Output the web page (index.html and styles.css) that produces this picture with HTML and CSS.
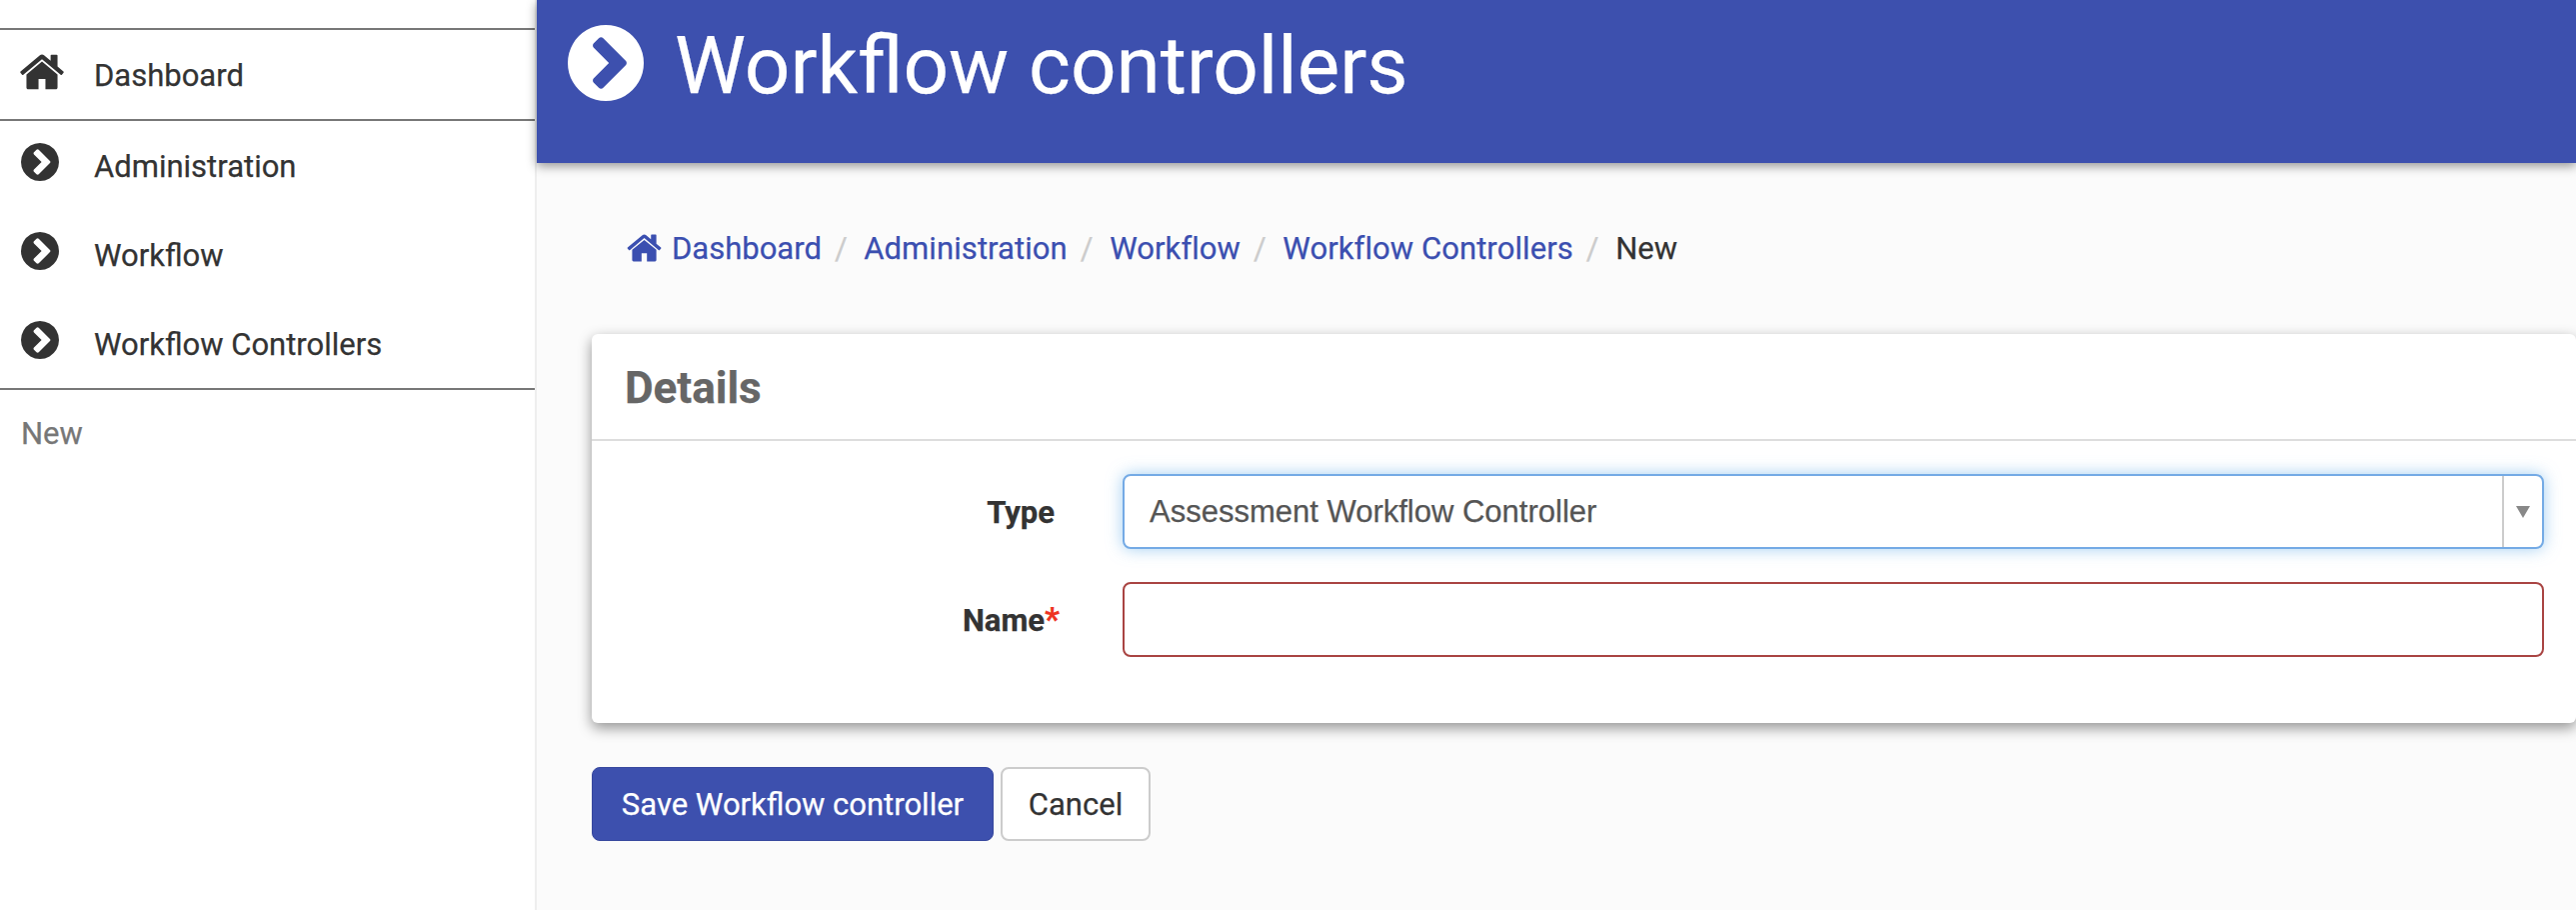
FILE: index.html
```html
<!DOCTYPE html>
<html lang="en">
<head>
<meta charset="utf-8">
<title>Workflow controllers</title>
<link rel="stylesheet" href="styles.css">
</head>
<body>
<svg class="defs" width="0" height="0" aria-hidden="true">
  <symbol id="i-home" viewBox="97 230 1598 1334"><path d="M1472 992v480q0 26-19 45t-45 19h-384v-384h-256v384h-384q-26 0-45-19t-19-45v-480q0-1 .5-3t.5-3l575-474 575 474q1 2 1 6zm223-69l-62 74q-8 9-21 11h-3q-13 0-21-7l-692-577-692 577q-12 8-24 7-13-2-21-11l-62-74q-8-10-7-23.500t11-21.500l719-599q32-26 76-26t76 26l244 204v-195q0-14 9-23t23-9h192q14 0 23 9t9 23v408l219 182q10 8 11 21.500t-7 23.500z"/></symbol>
  <symbol id="i-chev" viewBox="128 128 1536 1536"><path d="M845 1395l454-454q19-19 19-45t-19-45l-454-454q-19-19-45-19t-45 19l-102 102q-19 19-19 45t19 45l307 307-307 307q-19 19-19 45t19 45l102 102q19 19 45 19t45-19zm819-499q0 209-103 385.500t-279.500 279.500-385.500 103-385.500-103-279.500-279.500-103-385.500 103-385.500 279.500-279.500 385.500-103 385.500 103 279.500 279.500 103 385.500z"/></symbol>
</svg>
<div class="app">
  <aside class="sidebar">
    <nav class="side-nav">
      <a class="side-home" href="#"><svg class="ico-home"><use href="#i-home"/></svg><span>Dashboard</span></a>
      <ul class="side-list">
        <li><a class="side-item" href="#"><svg class="ico-chev"><use href="#i-chev"/></svg><span>Administration</span></a></li>
        <li><a class="side-item" href="#"><svg class="ico-chev"><use href="#i-chev"/></svg><span>Workflow</span></a></li>
        <li><a class="side-item" href="#"><svg class="ico-chev"><use href="#i-chev"/></svg><span>Workflow Controllers</span></a></li>
      </ul>
      <div class="side-current">New</div>
    </nav>
  </aside>
  <main class="main">
    <header class="page-header">
      <svg class="ico-title"><use href="#i-chev"/></svg>
      <h1>Workflow controllers</h1>
    </header>
    <div class="content">
      <ol class="crumbs">
        <li><a href="#"><svg class="ico-crumb"><use href="#i-home"/></svg>Dashboard</a></li>
        <li><a href="#">Administration</a></li>
        <li><a href="#">Workflow</a></li>
        <li><a href="#">Workflow Controllers</a></li>
        <li class="current">New</li>
      </ol>
      <form class="form">
        <section class="card">
          <h2 class="card-title">Details</h2>
          <div class="card-body">
            <div class="field">
              <label class="field-label">Type</label>
              <div class="select">
                <span class="select-value">Assessment Workflow Controller</span>
                <span class="select-arrow"><i class="caret"></i></span>
              </div>
            </div>
            <div class="field">
              <label class="field-label">Name<span class="req">*</span></label>
              <div class="input"></div>
            </div>
          </div>
        </section>
        <div class="actions">
          <button type="button" class="btn btn-primary">Save Workflow controller</button>
          <button type="button" class="btn btn-default">Cancel</button>
        </div>
      </form>
    </div>
  </main>
</div>
</body>
</html>
```
FILE: styles.css
```css
* { box-sizing: border-box; }
html, body { margin: 0; padding: 0; height: 910px; overflow: hidden; }
body { font-family: Roboto, "Liberation Sans", sans-serif; font-size: 31px; color: #333; background: #fff; -webkit-text-stroke: .25px currentColor; }
.defs { position: absolute; }
a { text-decoration: none; color: inherit; }
svg { fill: currentColor; display: block; flex: none; }

.app { display: flex; height: 910px; }

.sidebar { width: 537px; flex: none; background: #fff; border-right: 2px solid #eee; padding-top: 28px; }
.side-home { display: flex; align-items: flex-start; height: 93px; padding: 24px 0 0 20px; border-top: 2px solid #777; border-bottom: 2px solid #777; }
.ico-home { width: 44px; height: 36px; }
.side-home span { margin-left: 30px; margin-top: 4px; line-height: 36px; }
.side-list { list-style: none; margin: 0; padding: 0; border-bottom: 2px solid #777; }
.side-item { display: flex; align-items: flex-start; height: 89px; padding: 22px 0 0 21px; }
.ico-chev { width: 38px; height: 38px; }
.side-item span { margin-left: 35px; line-height: 36px; margin-top: 6px; }
.side-current { padding: 26px 0 0 21px; line-height: 36px; color: #777; }

.main { flex: 1; min-width: 0; background: #fbfbfb; display: flex; flex-direction: column; }
.page-header { height: 163px; flex: none; display: flex; align-items: flex-start; padding: 25px 0 0 31px; background: #3d50ae; color: #fff; box-shadow: 0 3px 10px rgba(0,0,0,.42); position: relative; }
.ico-title { width: 76px; height: 76px; }
.page-header h1 { margin: 3px 0 0 31px; font-size: 80px; font-weight: 400; line-height: 76px; color: #fff; }

.content { padding: 0 0 0 55px; }
.crumbs { list-style: none; display: flex; margin: 0; padding: 68px 0 0 35px; line-height: 36px; }
.crumbs li { display: flex; }
.crumbs li + li::before { content: "/"; color: #ccc; padding: 0 16.5px 0 13px; }
.crumbs a { display: flex; align-items: flex-start; color: #3b4fb0; }
.crumbs li + li a { letter-spacing: .08px; }
.crumbs .current { color: #333; }
.ico-crumb { width: 35px; height: 28px; margin: 3px 10px 0 0; }

.form { margin-top: 67px; }
.card { background: #fff; border-radius: 6px; box-shadow: 0 5px 14px rgba(0,0,0,.42); height: 389px; }
.card-title { margin: 0; height: 107px; padding: 0 0 0 33px; border-bottom: 2px solid #ddd; font-size: 44px; font-weight: 700; line-height: 109px; color: #666; }
.card-body { padding: 33px 32px 0 0; }
.field { display: flex; height: 75px; margin-bottom: 33px; }
.field-label { width: 463px; flex: none; text-align: right; font-weight: 700; line-height: 77px; color: #333; }
.req { color: #e32; margin-right: -5px; font-size: 33px; line-height: 0; }
.select, .input { flex: 1; margin-left: 68px; height: 75px; border-radius: 8px; background: #fff; }
.select { display: flex; border: 2px solid #74aae5; box-shadow: 0 0 16px rgba(102,175,233,.6); }
.select-value { flex: 1; padding-left: 25px; font-family: "Liberation Sans", Arial, sans-serif; font-size: 31px; line-height: 71px; color: #555; }
.select-arrow { width: 40px; flex: none; border-left: 2px solid #ccc; display: flex; align-items: center; justify-content: center; }
.caret { width: 0; height: 0; border-style: solid; border-width: 12px 7px 0; border-color: #888 transparent transparent; }
.input { border: 2px solid #a94442; }

.actions { display: flex; gap: 7px; margin-top: 44px; }
.btn { height: 74px; border-radius: 8px; font-family: inherit; font-size: 31px; padding: 0; cursor: pointer; -webkit-text-stroke: inherit; }
.btn-primary { width: 402px; background: #3d50ae; color: #fff; border: 1px solid #37489e; }
.btn-default { width: 150px; background: #fff; color: #333; border: 2px solid #ccc; }
```
